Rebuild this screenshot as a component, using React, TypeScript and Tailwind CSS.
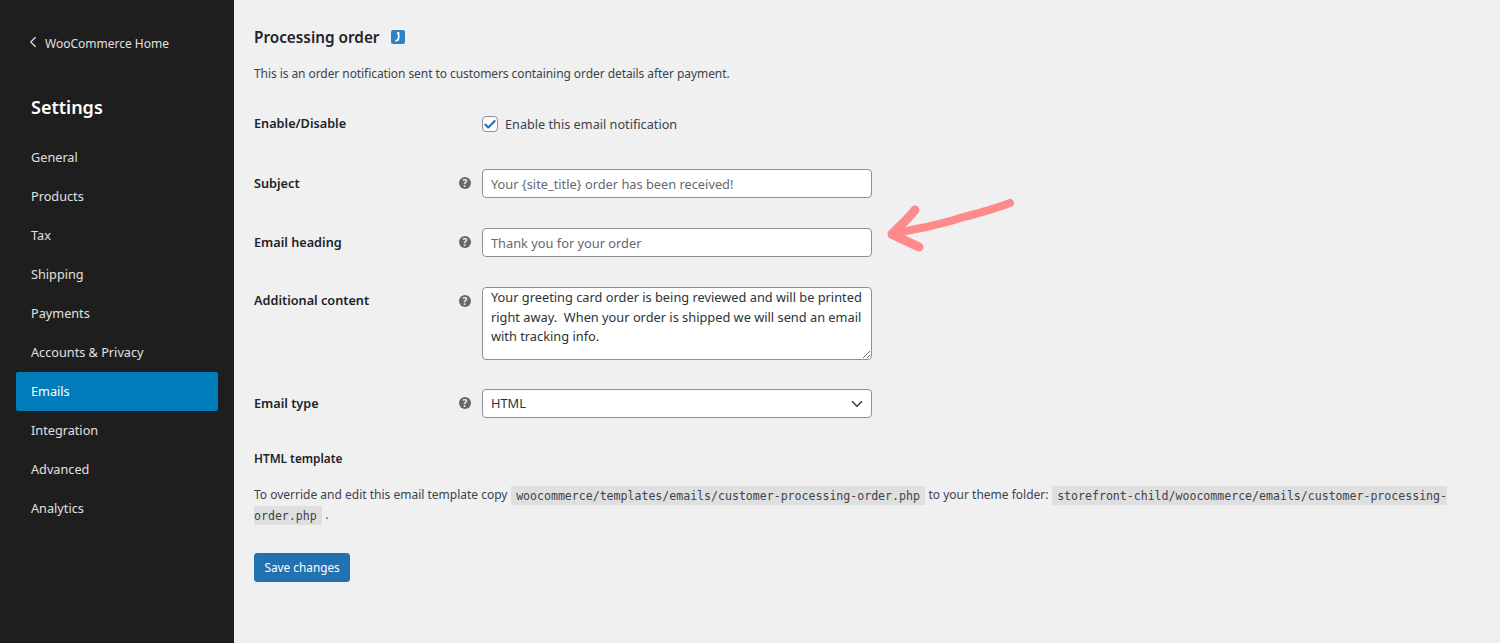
import { ChevronLeft, ChevronDown, Check } from 'lucide-react';

const menu = ['General', 'Products', 'Tax', 'Shipping', 'Payments', 'Accounts & Privacy', 'Emails', 'Integration', 'Advanced', 'Analytics'];

function Help() {
  return (
    <span className="flex h-3 w-3 items-center justify-center rounded-full bg-[#666] text-[10px] leading-none font-bold text-[#f0f0f1]">?</span>
  );
}

function Row({ label, labelClass, className, children }: { label: string; labelClass?: string; className?: string; children: React.ReactNode }) {
  return (
    <div className={`flex items-start ${className ?? ''}`}>
      <div className={`w-[200px] text-[12.7px] leading-[18px] font-semibold text-[#1d2327] ${labelClass ?? 'pt-[5px]'}`}>{label}</div>
      <div className="flex w-[28px] justify-end pr-[11px] pt-[8px]">
        <Help />
      </div>
      {children}
    </div>
  );
}

const inputCls = 'h-[29px] w-[390px] rounded-[4px] border border-[#8c8f94] bg-white px-2 text-[12.8px] leading-[27px]';
const codeCls = "bg-[#dfdfe0] px-[5.5px] py-[2.5px] font-['DejaVu_Sans_Mono',monospace] text-[11.57px]";

export default function App() {
  return (
    <div className="flex h-[643px] w-[1500px] overflow-hidden bg-[#f0f0f1] font-['Noto_Sans',sans-serif] text-[13px] text-[#3c434a]">
      {/* SIDEBAR */}
      <aside className="w-[234px] shrink-0 bg-[#1e1e1e] px-4 pt-[35px]">
        <div className="flex h-[18px] items-center text-[12px] text-[#e0e0e0]">
          <ChevronLeft size={18} strokeWidth={1.6} className="ml-[8px] mr-[3px] -translate-y-[2px]" />
          <span>WooCommerce Home</span>
        </div>
        <h1 className="mt-[40px] ml-[15px] text-[18px] leading-[28px] font-semibold text-white">Settings</h1>
        <nav className="mt-[17px] flex flex-col">
          {menu.map((m) => (
            <div
              key={m}
              className={`flex h-[39px] items-center rounded-[2px] pl-[15px] text-[12.7px] ${m === 'Emails' ? 'bg-[#007cba] text-white' : 'text-[#e0e0e0]'}`}
            >
              {m}
            </div>
          ))}
        </nav>
      </aside>

      {/* CONTENT */}
      <main className="relative flex-1 pl-5 pr-[50px]">
        <div className="flex items-center pt-[27px]">
          <h2 className="text-[15.3px] leading-[20px] font-semibold text-[#1d2327]">Processing order</h2>
          <span className="ml-[12px] flex h-[14px] w-[14px] items-center justify-center rounded-[2px] bg-[#2f83c4]">
            <svg width="10" height="10" viewBox="0 0 10 10" fill="none" stroke="white" strokeWidth="1.7">
              <path d="M2.4 8.8 C4.6 8.8 5.5 7.6 5.6 6 V1.2 H3.9" />
            </svg>
          </span>
        </div>

        <p className="mt-[18px] text-[12px] leading-[18px] tracking-[-0.07px]">This is an order notification sent to customers containing order details after payment.</p>

        <div className="mt-[31px] flex items-start">
          <div className="w-[228px] text-[12.7px] leading-[18px] font-semibold text-[#1d2327]">Enable/Disable</div>
          <label className="flex items-center pt-[1px]">
            <span className="flex h-4 w-4 items-center justify-center rounded-[4px] border border-[#8c8f94] bg-white">
              <Check size={15} strokeWidth={3.6} className="text-[#2271b1]" />
            </span>
            <span className="ml-[7px] text-[12.7px] leading-[18px]">Enable this email notification</span>
          </label>
        </div>

        <Row label="Subject" className="mt-[36px]">
          <input readOnly className={`${inputCls} placeholder:text-[#646970]`} placeholder="Your {site_title} order has been received!" />
        </Row>

        <Row label="Email heading" className="mt-[30px]">
          <input readOnly className={`${inputCls} placeholder:text-[#646970]`} placeholder="Thank you for your order" />
        </Row>

        <Row label="Additional content" labelClass="pt-[4px]" className="mt-[30px]">
          <textarea
            readOnly
            className="h-[73px] w-[390px] resize rounded-[4px] border border-[#8c8f94] bg-white px-2 py-0 text-[12.8px] leading-[19.5px] text-[#2c3338]"
            defaultValue={'Your greeting card order is being reviewed and will be printed right away.  When your order is shipped we will send an email with tracking info.'}
          />
        </Row>

        <Row label="Email type" className="mt-[29px]">
          <div className={`${inputCls} flex items-center justify-between pr-[5px] text-[#2c3338]`}>
            <span>HTML</span>
            <ChevronDown size={18} strokeWidth={2.2} className="text-[#3c434a]" />
          </div>
        </Row>

        <h3 className="mt-[31px] text-[11.8px] leading-[18px] font-semibold text-[#1d2327]">HTML template</h3>

        <p className="mt-[18px] text-[12px] leading-[20px]">
          To override and edit this email template copy{' '}
          <code className={codeCls}>woocommerce/templates/emails/customer-processing-order.php</code>{' '}
          to your theme folder:{' '}
          <code className={codeCls}>storefront-child/woocommerce/emails/customer-processing-order.php</code> .
        </p>

        <button className="mt-[28px] h-[29px] rounded-[3px] border border-[#2271b1] bg-[#2271b1] px-[9.5px] text-[11.8px] text-white">Save changes</button>

        {/* ARROW annotation */}
        <svg className="absolute left-[652px] top-[195px]" width="134" height="60" viewBox="0 0 134 60" fill="none" stroke="#ff8a8c" strokeLinecap="round" strokeLinejoin="round">
          <path d="M124 8 C106 15 90 19 74 23 C60 28 50 29 41 32 C28 34 18 36 6 40" strokeWidth="8" />
          <path d="M29 15 C22 24 14 31 6 39 C15 44 25 48 33 52" strokeWidth="9" />
        </svg>
      </main>
    </div>
  );
}
